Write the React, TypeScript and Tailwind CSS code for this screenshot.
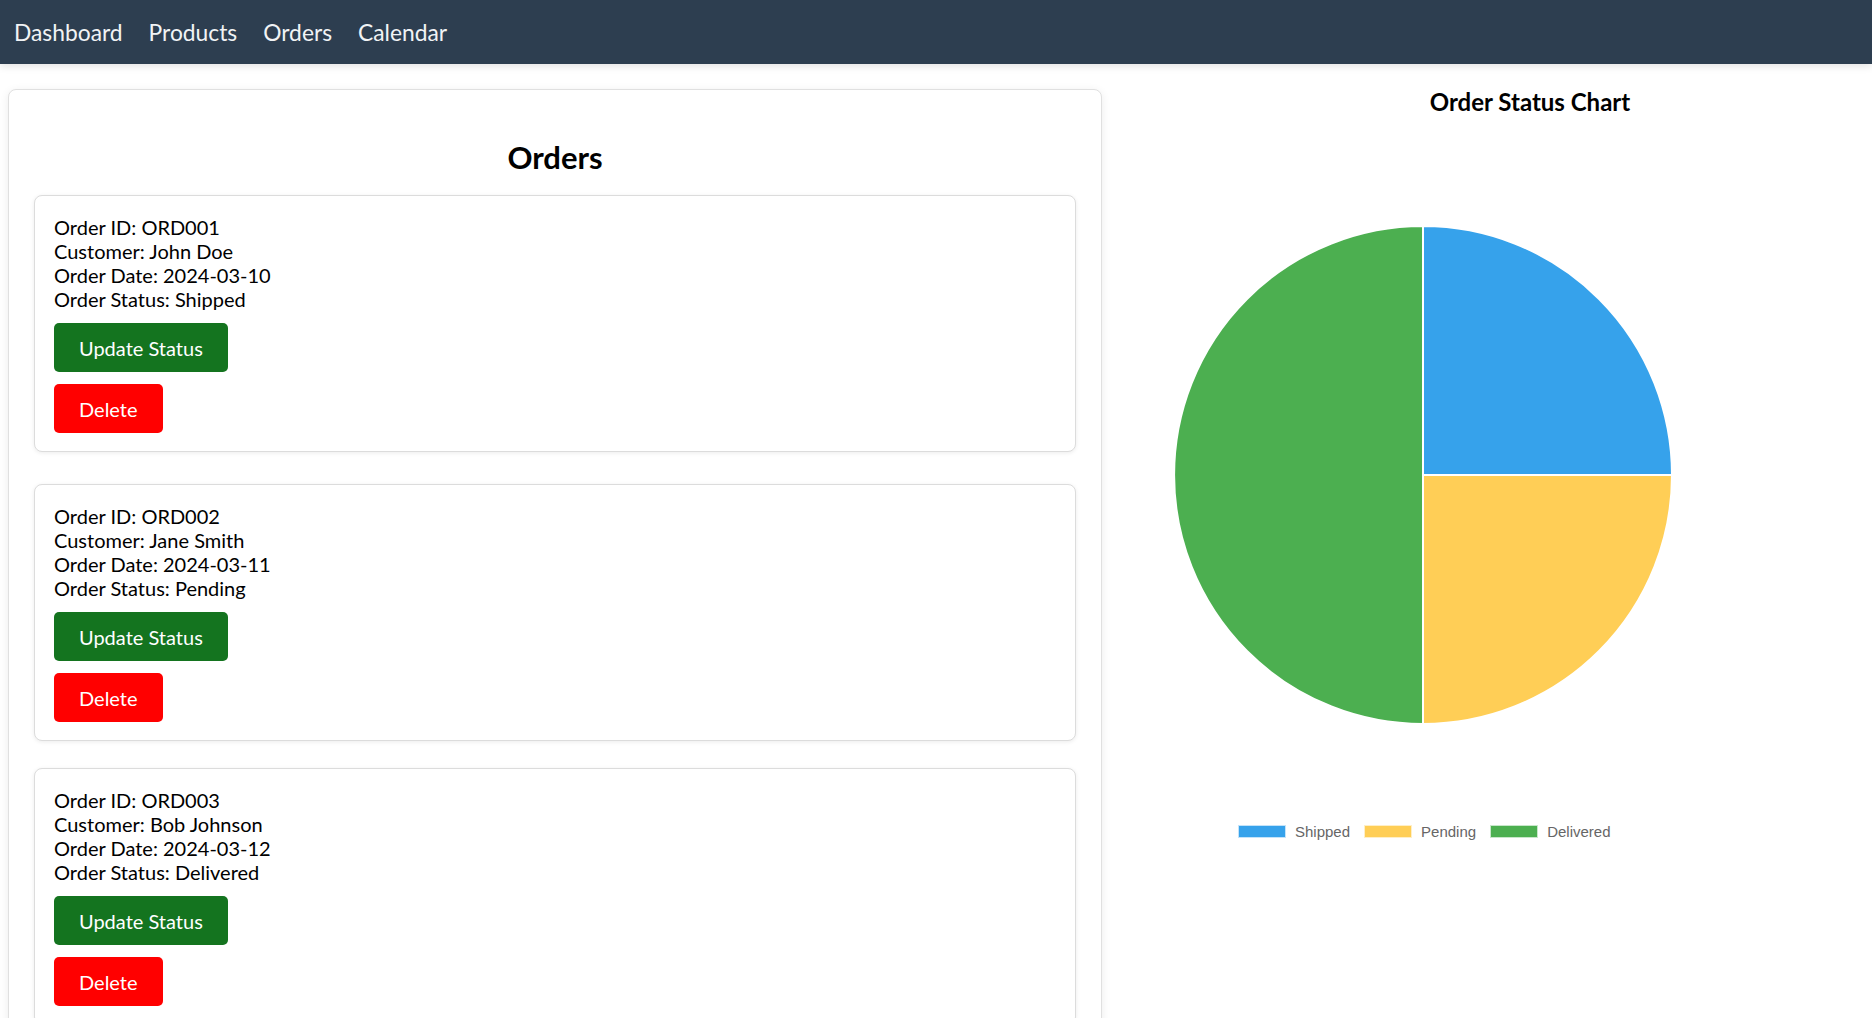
const orders = [
  { id: 'ORD001', customer: 'John Doe', date: '2024-03-10', status: 'Shipped' },
  { id: 'ORD002', customer: 'Jane Smith', date: '2024-03-11', status: 'Pending' },
  { id: 'ORD003', customer: 'Bob Johnson', date: '2024-03-12', status: 'Delivered' },
];

const legend = [
  { label: 'Shipped', color: 'bg-[#36a2eb]', border: 'border-[#c4e3f9]' },
  { label: 'Pending', color: 'bg-[#ffce56]', border: 'border-[#ffefc7]' },
  { label: 'Delivered', color: 'bg-[#4caf50]', border: 'border-[#c8e7ca]' },
];

const OrderCard: React.FC<{ order: (typeof orders)[number]; gap: string }> = ({ order, gap }) => {
  return (
    <div
      className={`border border-[#dcdcdc] rounded-lg bg-white shadow-[0_1px_4px_rgba(0,0,0,0.08)] pl-[19px] pt-[19px] pb-[18px] ${gap}`}
    >
      <div className="text-[20px] leading-[24px] text-black">
        <p>Order ID: {order.id}</p>
        <p>Customer: {order.customer}</p>
        <p>Order Date: {order.date}</p>
        <p>Order Status: {order.status}</p>
      </div>
      <div className="flex flex-col items-start gap-3 mt-3">
        <button className="h-[49px] px-[25px] rounded-[5px] bg-[#14741f] text-white text-[20px]">Update Status</button>
        <button className="h-[49px] px-[25px] rounded-[5px] bg-[#ff0000] text-white text-[20px]">Delete</button>
      </div>
    </div>
  );
};

const PieChart = () => {
  return (
    <svg width="500" height="500" viewBox="0 0 500 500">
      <path d="M250,250 L250,1 A249,249 0 0 1 499,250 Z" fill="#36a2eb" stroke="#fff" strokeWidth="2" />
      <path d="M250,250 L499,250 A249,249 0 0 1 250,499 Z" fill="#ffce56" stroke="#fff" strokeWidth="2" />
      <path d="M250,250 L250,499 A249,249 0 0 1 250,1 Z" fill="#4caf50" stroke="#fff" strokeWidth="2" />
    </svg>
  );
};

const App = () => {
  const gaps = ['mb-8', 'mb-[27px]', ''];
  return (
    <div className="min-h-screen bg-white font-['Lato','Open_Sans',sans-serif]">
      <nav className="h-16 bg-[#2d3e50] flex items-center pl-[14px] gap-[26px] shadow-[0_2px_8px_rgba(0,0,0,0.12)] relative">
        {['Dashboard', 'Products', 'Orders', 'Calendar'].map((item) => (
          <a key={item} className="text-[22.8px] text-[#f1f3f5] leading-[28px]">
            {item}
          </a>
        ))}
      </nav>
      <div className="flex items-start">
        <div className="ml-2 mt-[25px] w-[1094px] shrink-0 border border-[#e0e0e0] rounded-lg bg-white shadow-[0_2px_10px_rgba(0,0,0,0.08)] px-[25px] pt-[49px] pb-6">
          <h2 className="text-[31px] leading-[36px] font-bold text-center text-black mb-5">Orders</h2>
          {orders.map((order, i) => (
            <OrderCard key={order.id} order={order} gap={gaps[i]} />
          ))}
        </div>
        <div className="flex-1 flex flex-col">
          <h3 className="mt-[23px] pl-[86px] text-center text-[24px] leading-[29px] font-bold text-black">
            Order Status Chart
          </h3>
          <div className="ml-[71px] mt-[109px]">
            <PieChart />
          </div>
          <div className="ml-[136px] mt-[98px] h-[17px] flex items-center font-['Liberation_Sans',Arial,sans-serif] text-[15px] leading-[17px] text-[#666]">
            {legend.map((l) => (
              <div key={l.label} className="flex items-center mr-[14px]">
                <span className={`w-12 h-[13px] border ${l.color} ${l.border}`}></span>
                <span className="ml-[9px]">{l.label}</span>
              </div>
            ))}
          </div>
        </div>
      </div>
    </div>
  );
};

export default App;
